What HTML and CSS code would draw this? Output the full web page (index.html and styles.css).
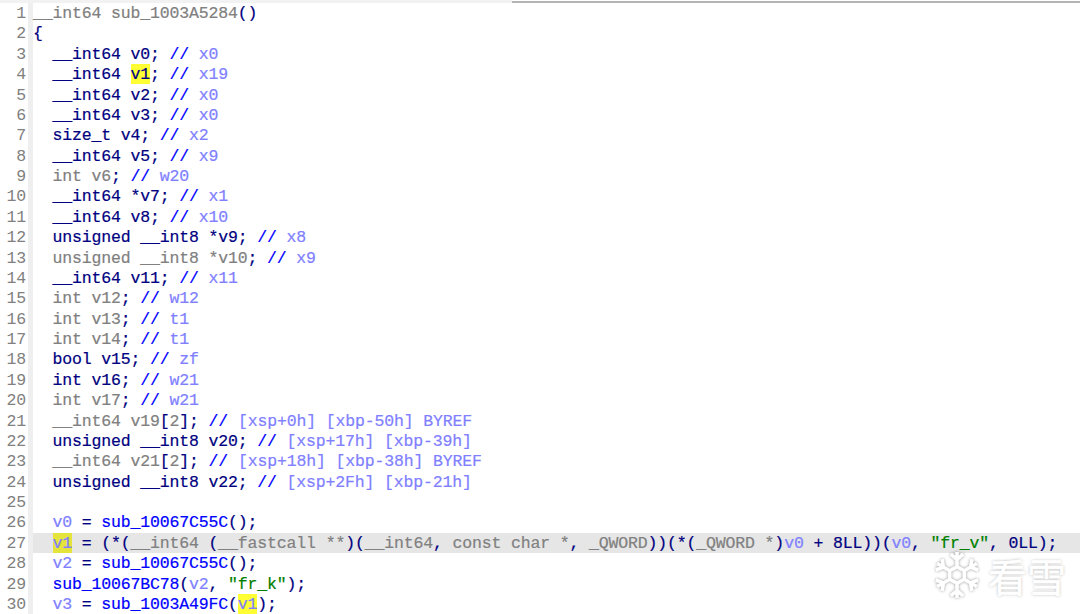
FILE: index.html
```html
<!DOCTYPE html>
<html lang="en">
<head>
<meta charset="utf-8">
<title>Pseudocode</title>
<link rel="stylesheet" href="styles.css">
</head>
<body>
<div class="topline"><div class="top-left"></div><div class="top-right"></div></div>
<main class="editor">
<ol class="gutter">
<li>1</li><li>2</li><li>3</li><li>4</li><li>5</li><li>6</li><li>7</li><li>8</li><li>9</li><li>10</li><li>11</li><li>12</li><li>13</li><li>14</li><li>15</li><li>16</li><li>17</li><li>18</li><li>19</li><li>20</li><li>21</li><li>22</li><li>23</li><li>24</li><li>25</li><li>26</li><li>27</li><li>28</li><li>29</li><li>30</li>
</ol>
<div class="code">
<div class="ln"><i class="m">__int64 sub_1003A5284</i><i class="k">()</i></div>
<div class="ln"><i class="k">{</i></div>
<div class="ln">  <i class="k">__int64</i> <i class="k">v0; </i><i class="f">//</i> <i class="c">x0</i></div>
<div class="ln">  <i class="k">__int64</i> <i class="hl k">v1</i><i class="k">; </i><i class="f">//</i> <i class="c">x19</i></div>
<div class="ln">  <i class="k">__int64 v2; </i><i class="f">//</i> <i class="c">x0</i></div>
<div class="ln">  <i class="k">__int64 v3; </i><i class="f">//</i> <i class="c">x0</i></div>
<div class="ln">  <i class="k">size_t v4; </i><i class="f">//</i> <i class="c">x2</i></div>
<div class="ln">  <i class="k">__int64 v5; </i><i class="f">//</i> <i class="c">x9</i></div>
<div class="ln">  <i class="m">int v6</i><i class="k">; </i><i class="f">//</i> <i class="c">w20</i></div>
<div class="ln">  <i class="k">__int64 *v7; </i><i class="f">//</i> <i class="c">x1</i></div>
<div class="ln">  <i class="k">__int64 v8; </i><i class="f">//</i> <i class="c">x10</i></div>
<div class="ln">  <i class="k">unsigned __int8 *v9; </i><i class="f">//</i> <i class="c">x8</i></div>
<div class="ln">  <i class="m">unsigned __int8 *v10</i><i class="k">; </i><i class="f">//</i> <i class="c">x9</i></div>
<div class="ln">  <i class="k">__int64 v11; </i><i class="f">//</i> <i class="c">x11</i></div>
<div class="ln">  <i class="m">int v12</i><i class="k">; </i><i class="f">//</i> <i class="c">w12</i></div>
<div class="ln">  <i class="m">int v13</i><i class="k">; </i><i class="f">//</i> <i class="c">t1</i></div>
<div class="ln">  <i class="m">int v14</i><i class="k">; </i><i class="f">//</i> <i class="c">t1</i></div>
<div class="ln">  <i class="k">bool v15; </i><i class="f">//</i> <i class="c">zf</i></div>
<div class="ln">  <i class="k">int v16; </i><i class="f">//</i> <i class="c">w21</i></div>
<div class="ln">  <i class="m">int v17</i><i class="k">; </i><i class="f">//</i> <i class="c">w21</i></div>
<div class="ln">  <i class="m">__int64 v19</i><i class="k">[</i><i class="m">2</i><i class="k">]; </i><i class="f">//</i> <i class="c">[xsp+0h] [xbp-50h] BYREF</i></div>
<div class="ln">  <i class="k">unsigned __int8 v20; </i><i class="f">//</i> <i class="c">[xsp+17h] [xbp-39h]</i></div>
<div class="ln">  <i class="m">__int64 v21</i><i class="k">[</i><i class="m">2</i><i class="k">]; </i><i class="f">//</i> <i class="c">[xsp+18h] [xbp-38h] BYREF</i></div>
<div class="ln">  <i class="k">unsigned __int8 v22; </i><i class="f">//</i> <i class="c">[xsp+2Fh] [xbp-21h]</i></div>
<div class="ln"> </div>
<div class="ln">  <i class="c">v0</i><i class="k"> = </i><i class="f">sub_10067C55C</i><i class="k">();</i></div>
<div class="ln cur">  <i class="hl dim c">v1</i><i class="k"> = (*(</i><i class="m">__int64</i> <i class="k">(</i><i class="m">__fastcall</i> <i class="m">**</i><i class="k">)(</i><i class="m">__int64</i><i class="k">, </i><i class="m">const char</i> <i class="m">*</i><i class="k">, </i><i class="m">_QWORD</i><i class="k">))(*(</i><i class="m">_QWORD</i> <i class="m">*</i><i class="k">)</i><i class="c">v0</i><i class="k"> + 8LL))(</i><i class="c">v0</i><i class="k">, </i><i class="s">"fr_v"</i><i class="k">, 0LL);</i></div>
<div class="ln">  <i class="c">v2</i><i class="k"> = </i><i class="f">sub_10067C55C</i><i class="k">();</i></div>
<div class="ln">  <i class="f">sub_10067BC78</i><i class="k">(</i><i class="c">v2</i><i class="k">, </i><i class="s">"fr_k"</i><i class="k">);</i></div>
<div class="ln">  <i class="c">v3</i><i class="k"> = </i><i class="f">sub_1003A49FC</i><i class="k">(</i><i class="hl c">v1</i><i class="k">);</i></div>
</div>
</main>
<div class="mark" aria-label="看雪">
<svg class="flake" viewBox="0 0 48 48" width="50" height="50">
<g fill="none" stroke="#fff" stroke-width="3.4">
<path d="M24 16V2M24 9l-6-5M24 9l6-5"/>
<path d="M24 16V2M24 9l-6-5M24 9l6-5" transform="rotate(60 24 24)"/>
<path d="M24 16V2M24 9l-6-5M24 9l6-5" transform="rotate(120 24 24)"/>
<path d="M24 16V2M24 9l-6-5M24 9l6-5" transform="rotate(180 24 24)"/>
<path d="M24 16V2M24 9l-6-5M24 9l6-5" transform="rotate(240 24 24)"/>
<path d="M24 16V2M24 9l-6-5M24 9l6-5" transform="rotate(300 24 24)"/>
<path d="M24 16l7 4v8l-7 4-7-4v-8z"/>
</g>
</svg>
<span class="mark-text">看雪</span>
</div>
</body>
</html>
```

FILE: styles.css
```css
* { box-sizing: border-box; }
html, body { margin: 0; padding: 0; }
body { width: 1080px; height: 614px; overflow: hidden; background: #fff; position: relative; font-family: "Liberation Mono", "DejaVu Sans Mono", monospace; font-size: 16.5px; }
.topline { height: 3px; display: flex; }
.top-left { width: 512px; background: #f2f2f2; }
.top-right { flex: 1; height: 2px; margin-top: 1px; background: #b4b4b4; }
.editor { display: flex; }
.gutter { list-style: none; margin: 0; padding: 0 2px 0 0; width: 28px; color: #808080; text-align: right; flex: none; letter-spacing: -0.15px; }
.gutter li { height: 20.38px; line-height: 20.38px; position: relative; top: 1px; }
.code { flex: 1; min-width: 0; border-left: 5px solid #efefef; }
.ln { height: 20.38px; line-height: 20.38px; white-space: pre; letter-spacing: -0.15px; color: #000080; -webkit-text-stroke: 0.2px; }
.ln i { font-style: normal; position: relative; top: 1px; }
.cur { background: #e6e6e6; }
.k { color: #000080; }
.m { color: #808080; }
.f { color: #0000ff; }
.c { color: #8080ff; }
.s { color: #008000; }
.ln .hl { display: inline-block; height: 20px; line-height: 22.38px; vertical-align: top; top: 0; background: #ffff33; }
.ln .dim { background: #e4e43c; }
.mark { position: absolute; left: 932px; top: 547px; display: flex; align-items: center; gap: 6px; color: #fff; text-shadow: 0 0 3px rgba(0,0,0,.35); }
.mark-text { font: 39px "Noto Sans CJK SC", sans-serif; -webkit-text-stroke: 0.6px #fff; }
.flake { filter: drop-shadow(0 0 1.5px rgba(0,0,0,.4)); }
```
